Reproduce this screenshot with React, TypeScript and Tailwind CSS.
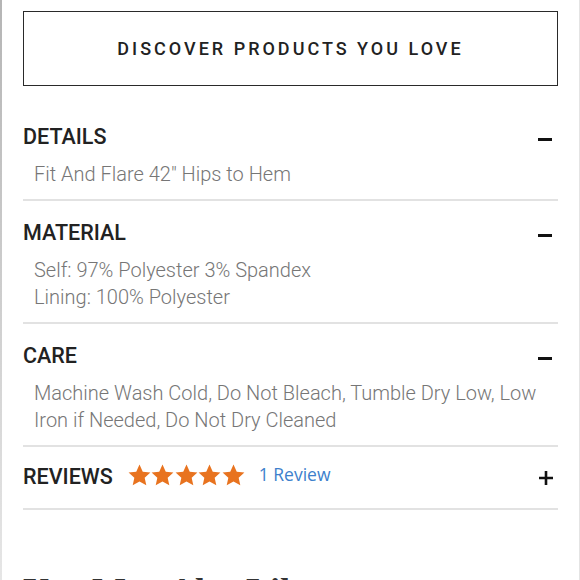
const Star = () => (
  <svg width="23" height="22" viewBox="0 0 24 23" className="fill-[#e8731f]">
    <path d="M12 0.6l3.4 7.4 8 0.9-6 5.5 1.7 7.9L12 18.3l-7.1 4 1.7-7.9-6-5.5 8-0.9z" />
  </svg>
);

const Section = ({ title, lines }: { title: string; lines: string[] }) => (
  <div className="border-b-2 border-[#e2e2e2] pt-[20px] pb-[11px]">
    <div className="flex items-start justify-between">
      <h3 className="text-[21.5px] leading-[24px] font-medium text-[#222]">{title}</h3>
      <div className="w-[14px] h-[3px] bg-[#111] mt-[13px] mr-[6px]" />
    </div>
    <div className="pl-[11px] pt-[12px] text-[20px] leading-[27px] text-[#767676] font-light">
      {lines.map((l) => (
        <p key={l}>{l}</p>
      ))}
    </div>
  </div>
);

export default function App() {
  return (
    <div
      className="w-[580px] h-[580px] overflow-hidden bg-white flex border-r border-[#e4e4e4]"
      style={{ fontFamily: 'Roboto, "Liberation Sans", sans-serif' }}
    >
      <div className="w-[2px] shrink-0 bg-gradient-to-b from-[#b5b5b5] to-[#e6e6e6]" />
      <div className="flex-1 pl-[21px] pr-[21px] pt-[11px]">
        <button className="w-full h-[75px] border-[1.5px] border-[#2a2a2a] text-[18px] font-medium tracking-[3px] text-[#222] mb-[19px]">
          DISCOVER PRODUCTS YOU LOVE
        </button>
        <Section title="DETAILS" lines={['Fit And Flare 42" Hips to Hem']} />
        <Section title="MATERIAL" lines={['Self: 97% Polyester 3% Spandex', 'Lining: 100% Polyester']} />
        <Section
          title="CARE"
          lines={['Machine Wash Cold, Do Not Bleach, Tumble Dry Low, Low', 'Iron if Needed, Do Not Dry Cleaned']}
        />
        <div className="flex items-center justify-between h-[63px] border-b-2 border-[#e2e2e2]">
          <div className="flex items-center">
            <h3 className="text-[21.5px] leading-[24px] font-medium text-[#222] mb-[1px]">REVIEWS</h3>
            <div className="flex ml-[15px] gap-[0.5px] mb-[6px]">
              <Star />
              <Star />
              <Star />
              <Star />
              <Star />
            </div>
            <span
              className="ml-[14px] text-[17.5px] leading-[24px] text-[#3d7fcc] mb-[8px]"
              style={{ fontFamily: '"Open Sans", sans-serif' }}
            >
              1 Review
            </span>
          </div>
          <svg width="14" height="14" viewBox="0 0 14 14" className="mr-[5px] mt-[1px]">
            <path d="M7 0v14M0 7h14" stroke="#111" strokeWidth="2.6" />
          </svg>
        </div>
        <h2
          className="mt-[61px] text-[36px] leading-[40px] font-bold text-[#333]"
          style={{ fontFamily: '"Liberation Serif", serif' }}
        >
          You May Also Like
        </h2>
      </div>
    </div>
  );
}
